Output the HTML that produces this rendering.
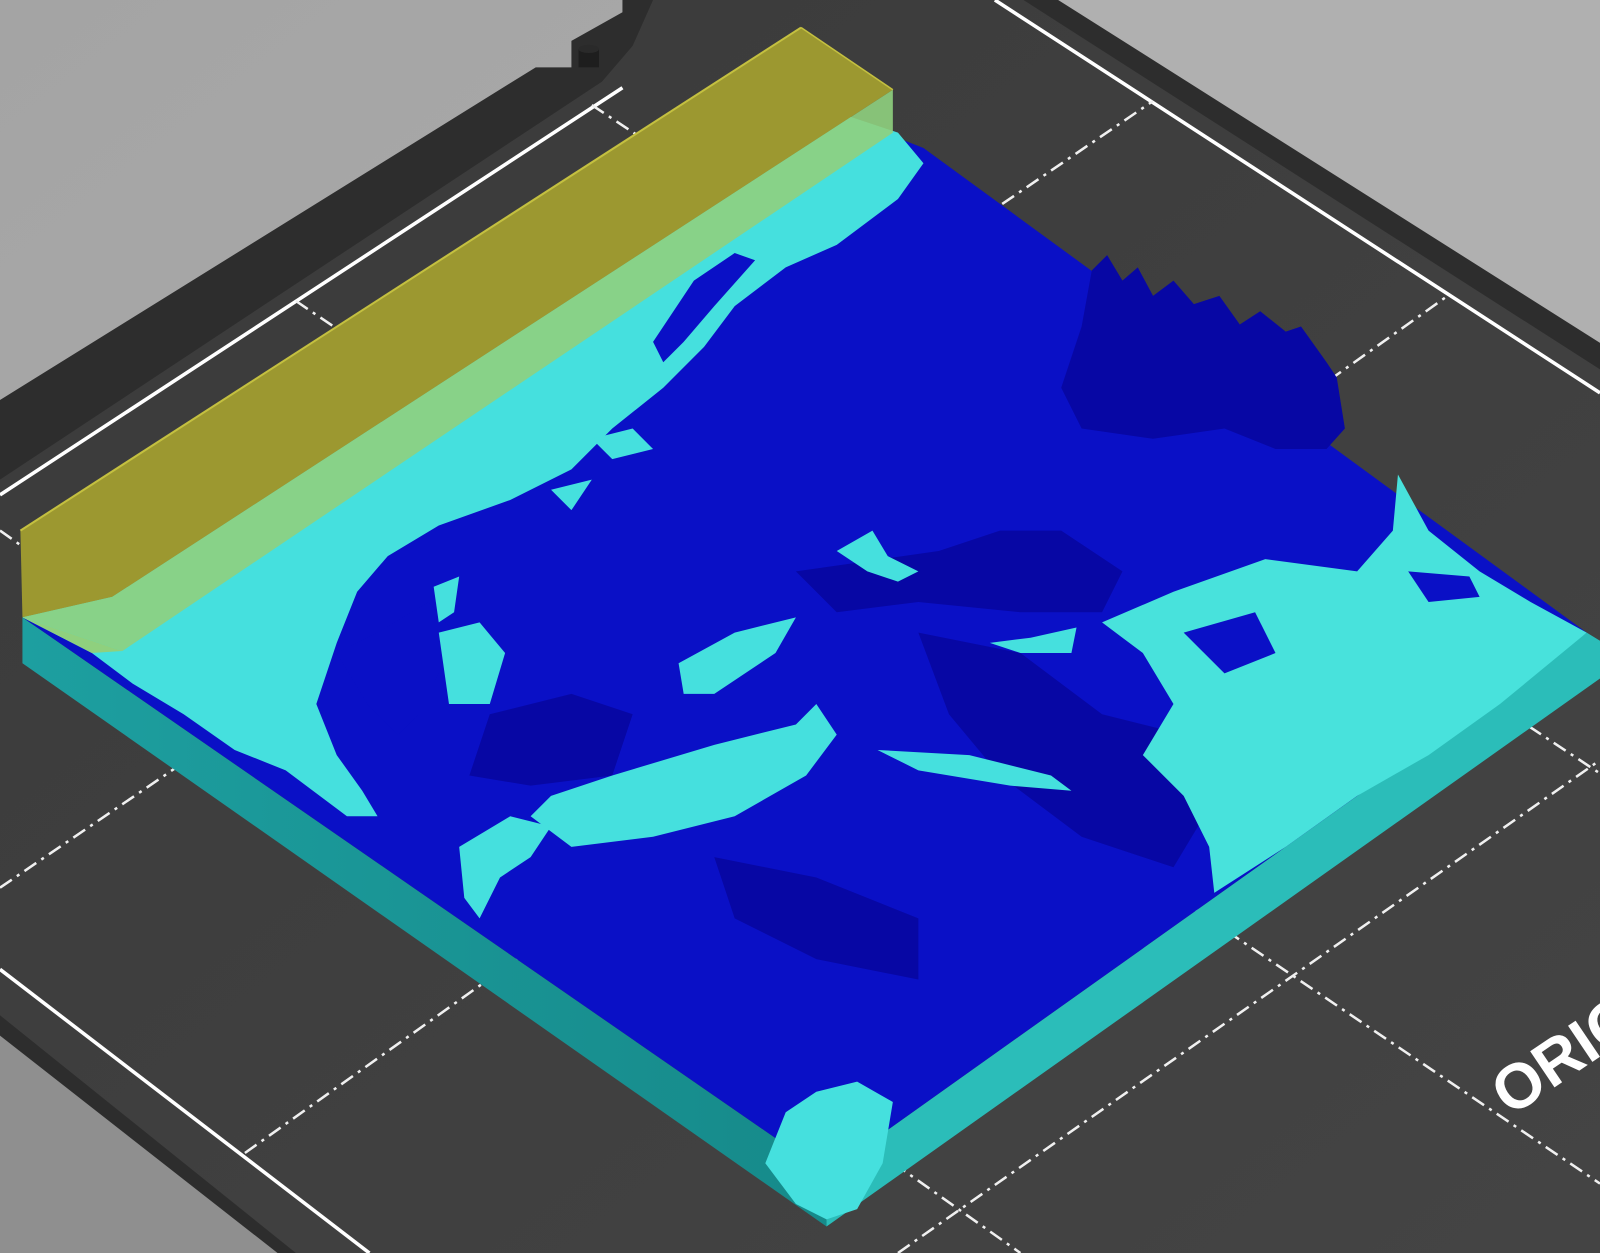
<!DOCTYPE html>
<html><head><meta charset="utf-8"><style>
html,body{margin:0;padding:0;width:1600px;height:1253px;overflow:hidden;background:#a8a8a8}
svg{display:block}
</style></head><body>
<svg width="1600" height="1253" viewBox="0 0 1568 1228" preserveAspectRatio="none" xmlns="http://www.w3.org/2000/svg">
<defs>
<linearGradient id="bg" x1="0" y1="0" x2="1" y2="1">
<stop offset="0" stop-color="#a4a4a4"/><stop offset="0.5" stop-color="#ababab"/><stop offset="1" stop-color="#9a9a9a"/>
</linearGradient>
<linearGradient id="bed" x1="0" y1="0" x2="1" y2="1">
<stop offset="0" stop-color="#3a3a3a"/><stop offset="1" stop-color="#444"/>
</linearGradient>
<linearGradient id="lf" x1="0" y1="0" x2="1" y2="0">
<stop offset="0" stop-color="#1d9fa0"/><stop offset="1" stop-color="#168a8a"/>
</linearGradient>
</defs>
<rect width="1568" height="1228" fill="url(#bg)"/>
<rect x="1000" y="0" width="568" height="400" fill="#b0b0b0"/>
<rect x="0" y="880" width="400" height="348" fill="#8f8f8f"/>
<polygon points="0,392 525,66 560,66 560,40 610,12 610,0 1037,0 1568,336 1568,1228 272,1228 0,1015" fill="#2d2d2d"/>
<polygon points="0,470 590,80 620,45 640,0 1003,0 1568,362 1568,1228 290,1228 0,995" fill="url(#bed)"/>
<rect x="567" y="48" width="20" height="18" fill="#1e1e1e"/>
<ellipse cx="577" cy="48" rx="10" ry="4" fill="#2a2a2a"/>
<g stroke="#fff" stroke-width="3.5" fill="none">
<line x1="0" y1="485" x2="610" y2="86"/>
<line x1="975" y1="0" x2="1568" y2="385"/>
<line x1="0" y1="950" x2="362" y2="1228"/>
</g>
<g stroke="#f0f0f0" stroke-width="2.5" fill="none" stroke-dasharray="14,6,3,6">
<line x1="580" y1="103" x2="1568" y2="758"/>
<line x1="290" y1="295" x2="1568" y2="1160"/>
<line x1="0" y1="520" x2="1000" y2="1228"/>
<line x1="0" y1="870" x2="1130" y2="99"/>
<line x1="240" y1="1130" x2="1420" y2="289"/>
<line x1="880" y1="1228" x2="1568" y2="745"/>
</g>
<text x="1480" y="1095" transform="rotate(-34 1480 1095)" font-family="Liberation Sans, sans-serif" font-weight="bold" font-size="62" fill="#fff">ORIG</text>
<polygon points="22,605 810,1150 810,1202 22,650" fill="url(#lf)"/>
<polygon points="810,1150 1555,620 1568,628 1568,665 810,1202" fill="#2bbdb9"/>
<polygon points="22,605 790,100 905,145 1555,620 810,1150" fill="#0a10c6"/>
<g fill="#0707a4">
<polygon points="1070,265 1085,250 1100,275 1115,262 1130,290 1150,275 1170,298 1195,290 1215,318 1235,305 1260,325 1275,320 1300,355 1310,370 1318,420 1300,440 1250,440 1200,420 1130,430 1060,420 1040,380 1060,320"/>
<polygon points="780,560 850,550 920,540 980,520 1040,520 1100,560 1080,600 1000,600 900,590 820,600"/>
<polygon points="900,620 1000,640 1080,700 1160,720 1180,800 1150,850 1060,820 980,760 930,700"/>
<polygon points="480,700 560,680 620,700 600,760 520,770 460,760"/>
<polygon points="700,840 800,860 900,900 900,960 800,940 720,900"/>
</g>
<polygon fill="#45e0de" points="22,605 790,100 880,130 905,160 880,195 820,240 770,262 720,300 690,340 650,380 600,420 560,460 500,490 430,515 380,545 350,580 330,630 310,690 330,740 355,775 370,800 340,800 280,755 230,735 180,700 130,670 90,640"/>
<polygon fill="#0a10c6" points="640,335 680,275 720,248 740,255 700,300 670,335 650,355"/>
<polygon fill="#0a10c6" points="330,640 370,620 420,590 445,620 430,660 410,700 390,720 360,690"/>
<g fill="#45e0de">
<polygon points="425,575 450,565 445,600 430,610"/>
<polygon points="430,620 470,610 495,640 480,690 440,690"/>
<polygon points="665,650 720,620 780,605 760,640 700,680 670,680"/>
<polygon points="820,540 855,520 870,545 900,560 880,570 850,560"/>
<polygon points="860,735 950,740 1030,760 1050,775 990,770 900,755"/>
<polygon points="970,630 1010,625 1055,615 1050,640 1000,640"/>
<polygon points="600,760 700,730 780,710 800,690 820,720 790,760 720,800 640,820 560,830 520,800 540,780"/>
<polygon points="450,830 500,800 540,810 520,840 490,860 470,900 455,880"/>
<polygon points="750,1140 770,1090 800,1070 840,1060 875,1080 865,1140 840,1185 810,1195 780,1180"/>
<polygon points="540,480 580,470 560,500"/>
<polygon points="580,430 620,420 640,440 600,450"/>
</g>
<polygon fill="#48e2dc" points="1080,610 1150,580 1240,548 1330,560 1365,520 1370,465 1400,520 1450,560 1500,590 1555,620 1470,690 1400,740 1330,780 1260,830 1190,875 1185,830 1160,780 1120,740 1150,690 1120,640"/>
<polygon fill="#0a10c6" points="1160,620 1230,600 1250,640 1200,660"/>
<polygon fill="#0a10c6" points="1380,560 1440,565 1450,585 1400,590"/>
<polygon points="20,520 785,27 875,88 110,585 22,605" fill="#9c9830"/>
<polygon points="22,605 110,585 875,88 875,130 120,638" fill="#8fd07e" fill-opacity="0.9"/>
<polygon points="22,605 120,638 90,640" fill="#8fd07e"/>
<line x1="20" y1="520" x2="785" y2="27" stroke="#c4c040" stroke-width="2"/>
<line x1="785" y1="27" x2="875" y2="88" stroke="#c4c040" stroke-width="1.5"/>
</svg>
</body></html>
